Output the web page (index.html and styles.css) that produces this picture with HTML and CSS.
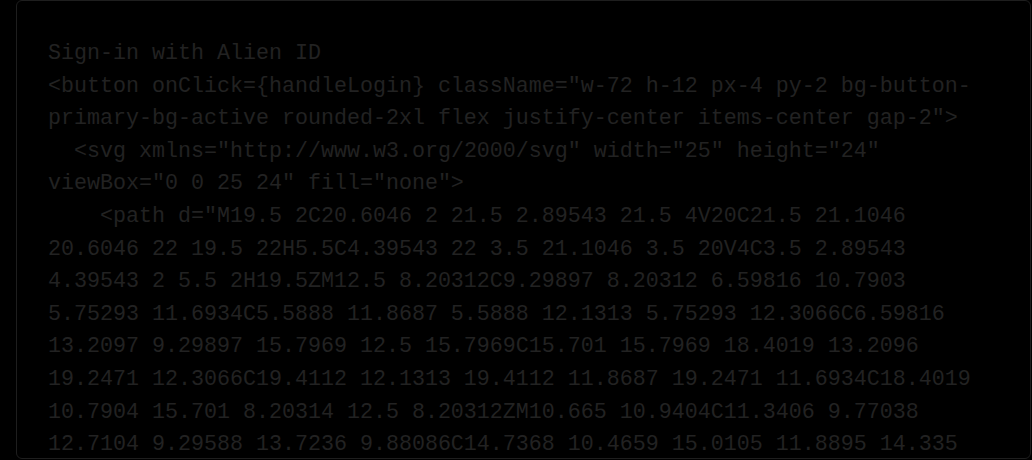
FILE: index.html
```html
<!DOCTYPE html>
<html lang="en">
<head>
<meta charset="utf-8">
<title>Code</title>
<link rel="stylesheet" href="styles.css">
</head>
<body>
<div class="frame">
<pre class="code">Sign-in with Alien ID
&lt;button onClick={handleLogin} className="w-72 h-12 px-4 py-2 bg-button-primary-bg-active rounded-2xl flex justify-center items-center gap-2"&gt;
  &lt;svg xmlns="http://www.w3.org/2000/svg" width="25" height="24" viewBox="0 0 25 24" fill="none"&gt;
    &lt;path d="M19.5 2C20.6046 2 21.5 2.89543 21.5 4V20C21.5 21.1046 20.6046 22 19.5 22H5.5C4.39543 22 3.5 21.1046 3.5 20V4C3.5 2.89543 4.39543 2 5.5 2H19.5ZM12.5 8.20312C9.29897 8.20312 6.59816 10.7903 5.75293 11.6934C5.5888 11.8687 5.5888 12.1313 5.75293 12.3066C6.59816 13.2097 9.29897 15.7969 12.5 15.7969C15.701 15.7969 18.4019 13.2096 19.2471 12.3066C19.4112 12.1313 19.4112 11.8687 19.2471 11.6934C18.4019 10.7904 15.701 8.20314 12.5 8.20312ZM10.665 10.9404C11.3406 9.77038 12.7104 9.29588 13.7236 9.88086C14.7368 10.4659 15.0105 11.8895 14.335 13.0596C13.6595 14.2296 12.2896 14.7041 11.2764 14.1191C10.2632 13.5341 9.98952 12.1105 10.665 10.9404Z" fill="white"/&gt;
  &lt;/svg&gt;
&lt;/button&gt;</pre>
</div>
</body>
</html>
```
FILE: styles.css
```css
html, body {
  margin: 0;
  padding: 0;
  background: #000;
  overflow: hidden;
}
.frame {
  box-sizing: border-box;
  margin-left: 16px;
  width: 1015px;
  height: 459px;
  border: 1px solid #1e1e1e;
  border-radius: 6px;
  padding: 37px 42px 0 31px;
  overflow: hidden;
  background: #000;
}
.code {
  margin: 0;
  font-family: "Liberation Mono", "DejaVu Sans Mono", monospace;
  font-size: 21.67px;
  line-height: 32.6px;
  color: #222222;
  white-space: pre-wrap;
  word-break: normal;
  overflow-wrap: break-word;
}
```
